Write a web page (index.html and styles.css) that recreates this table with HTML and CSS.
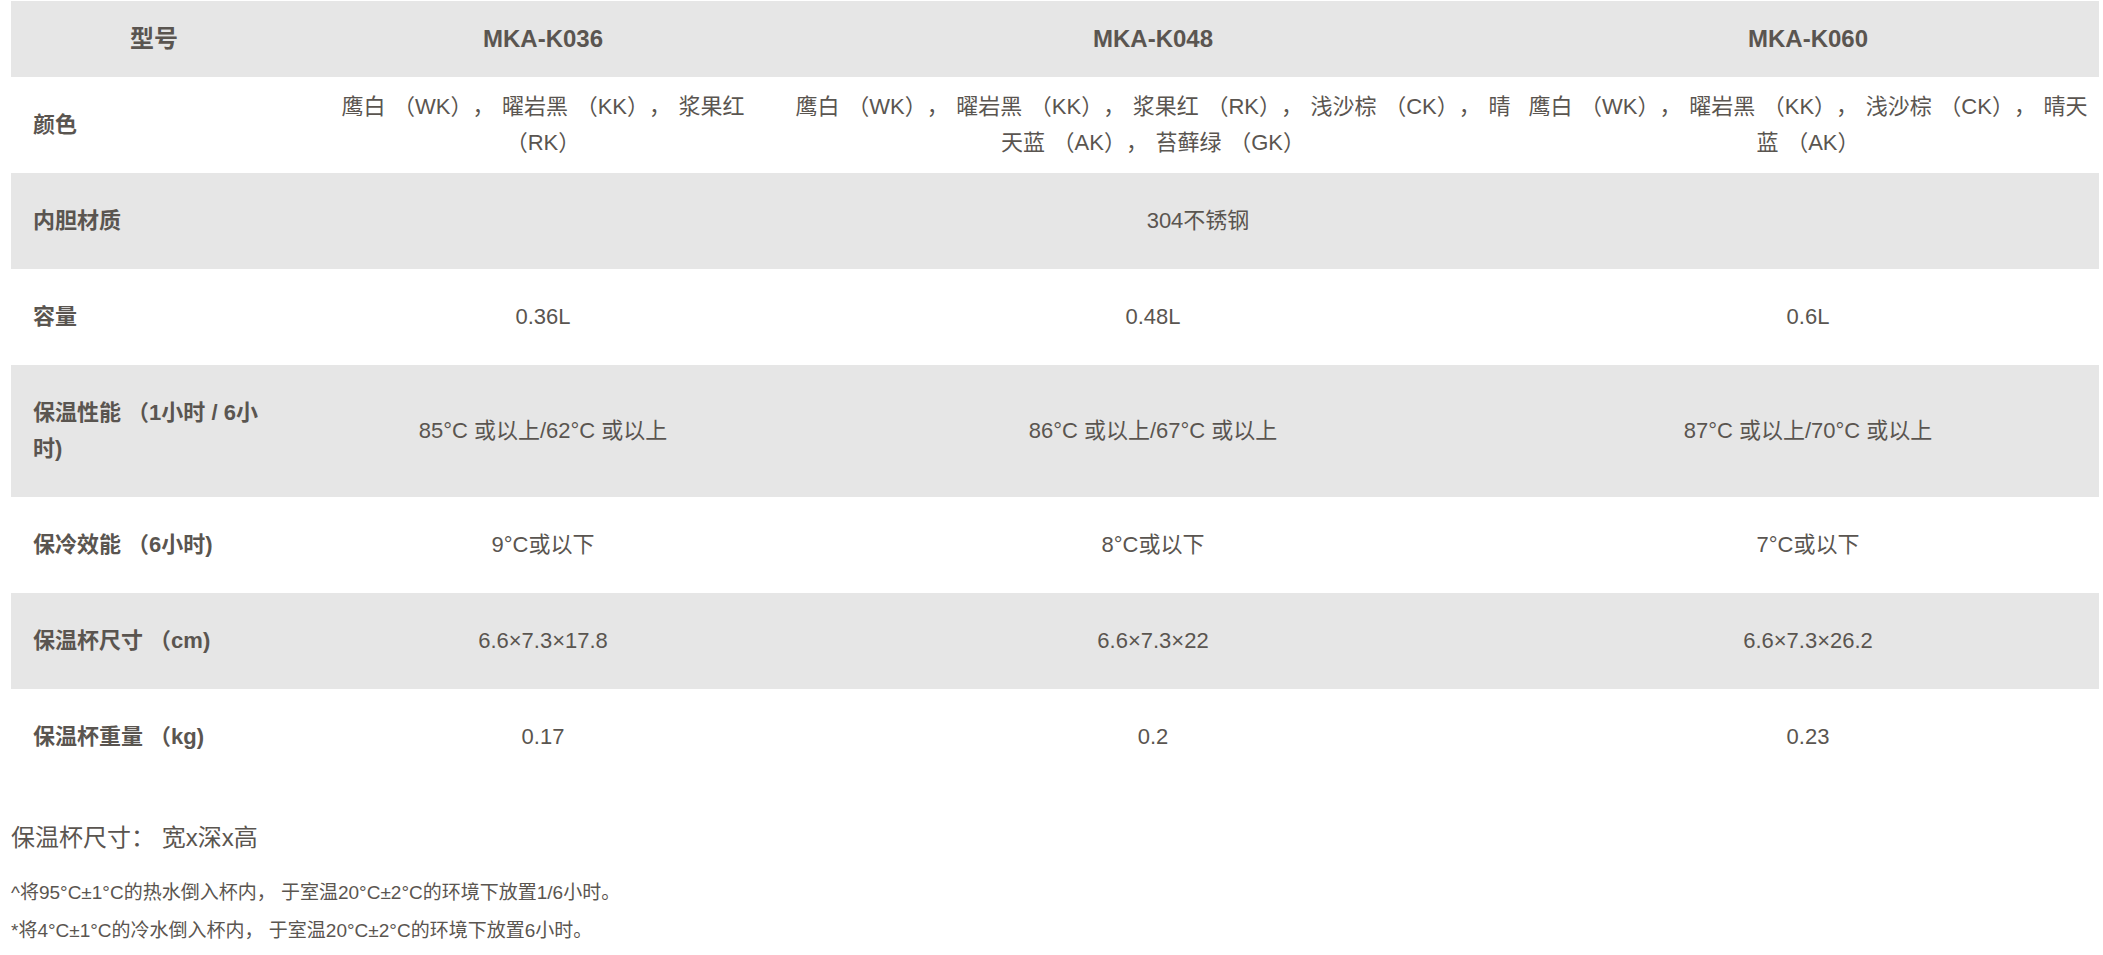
FILE: index.html
```html
<!DOCTYPE html>
<html lang="zh-CN">
<head>
<meta charset="utf-8">
<title>规格参数</title>
<link rel="stylesheet" href="styles.css">
</head>
<body>
<div class="page">
  <table class="spec">
    <colgroup>
      <col class="c-label">
      <col class="c-k036">
      <col class="c-k048">
      <col class="c-k060">
    </colgroup>
    <tr class="row head">
      <th class="label-head">型号</th>
      <th>MKA-K036</th>
      <th>MKA-K048</th>
      <th>MKA-K060</th>
    </tr>
    <tr class="row white colors">
      <td class="label">颜色</td>
      <td>鹰白 （WK）， 曜岩黑 （KK）， 浆果红<br>（RK）</td>
      <td>鹰白 （WK）， 曜岩黑 （KK）， 浆果红 （RK）， 浅沙棕 （CK）， 晴<br>天蓝 （AK）， 苔藓绿 （GK）</td>
      <td>鹰白 （WK）， 曜岩黑 （KK）， 浅沙棕 （CK）， 晴天<br>蓝 （AK）</td>
    </tr>
    <tr class="row grey">
      <td class="label">内胆材质</td>
      <td colspan="3">304不锈钢</td>
    </tr>
    <tr class="row white">
      <td class="label">容量</td>
      <td>0.36L</td>
      <td>0.48L</td>
      <td>0.6L</td>
    </tr>
    <tr class="row grey tall">
      <td class="label">保温性能 （1小时 / 6小时)</td>
      <td>85°C 或以上/62°C 或以上</td>
      <td>86°C 或以上/67°C 或以上</td>
      <td>87°C 或以上/70°C 或以上</td>
    </tr>
    <tr class="row white">
      <td class="label">保冷效能 （6小时)</td>
      <td>9°C或以下</td>
      <td>8°C或以下</td>
      <td>7°C或以下</td>
    </tr>
    <tr class="row grey">
      <td class="label">保温杯尺寸 （cm)</td>
      <td>6.6×7.3×17.8</td>
      <td>6.6×7.3×22</td>
      <td>6.6×7.3×26.2</td>
    </tr>
    <tr class="row white">
      <td class="label">保温杯重量 （kg)</td>
      <td>0.17</td>
      <td>0.2</td>
      <td>0.23</td>
    </tr>
  </table>
  <p class="size-note">保温杯尺寸： 宽x深x高</p>
  <p class="note">^将95°C±1°C的热水倒入杯内， 于室温20°C±2°C的环境下放置1/6小时。</p>
  <p class="note">*将4°C±1°C的冷水倒入杯内， 于室温20°C±2°C的环境下放置6小时。</p>
</div>
</body>
</html>
```

FILE: styles.css
```css
html, body {
  margin: 0;
  padding: 0;
  background: #ffffff;
}

body {
  font-family: "Liberation Sans", Arial, "Noto Sans CJK SC", sans-serif;
  color: #5a5550;
  text-spacing-trim: space-all;
}

.page {
  padding: 1px 4px 0 11px;
}

.spec {
  width: 2088px;
  border-collapse: collapse;
  table-layout: fixed;
  font-size: 22px;
  line-height: 36px;
}

.c-label { width: 286px; }
.c-k036 { width: 492px; }
.c-k048 { width: 728px; }
.c-k060 { width: 582px; }

.row { height: 96px; }
.row.head { height: 76px; }
.row.tall { height: 132px; }

.grey, .head { background: #e6e6e6; }
.white { background: #ffffff; }

.spec th,
.spec td {
  padding: 0 2px;
  text-align: center;
  vertical-align: middle;
  font-weight: normal;
  white-space: normal;
}

.spec th {
  font-weight: bold;
  font-size: 24px;
}

.colors td {
  word-spacing: 1.5px;
}

.spec td.label {
  text-align: left;
  font-weight: bold;
  padding-left: 22px;
  padding-right: 22px;
  word-spacing: 0;
}

.size-note {
  margin: 35px 0 0 0;
  font-size: 24px;
  line-height: 36px;
}

.note {
  margin: 0;
  font-size: 19px;
  line-height: 38px;
}

.size-note + .note {
  margin-top: 18px;
}
```
